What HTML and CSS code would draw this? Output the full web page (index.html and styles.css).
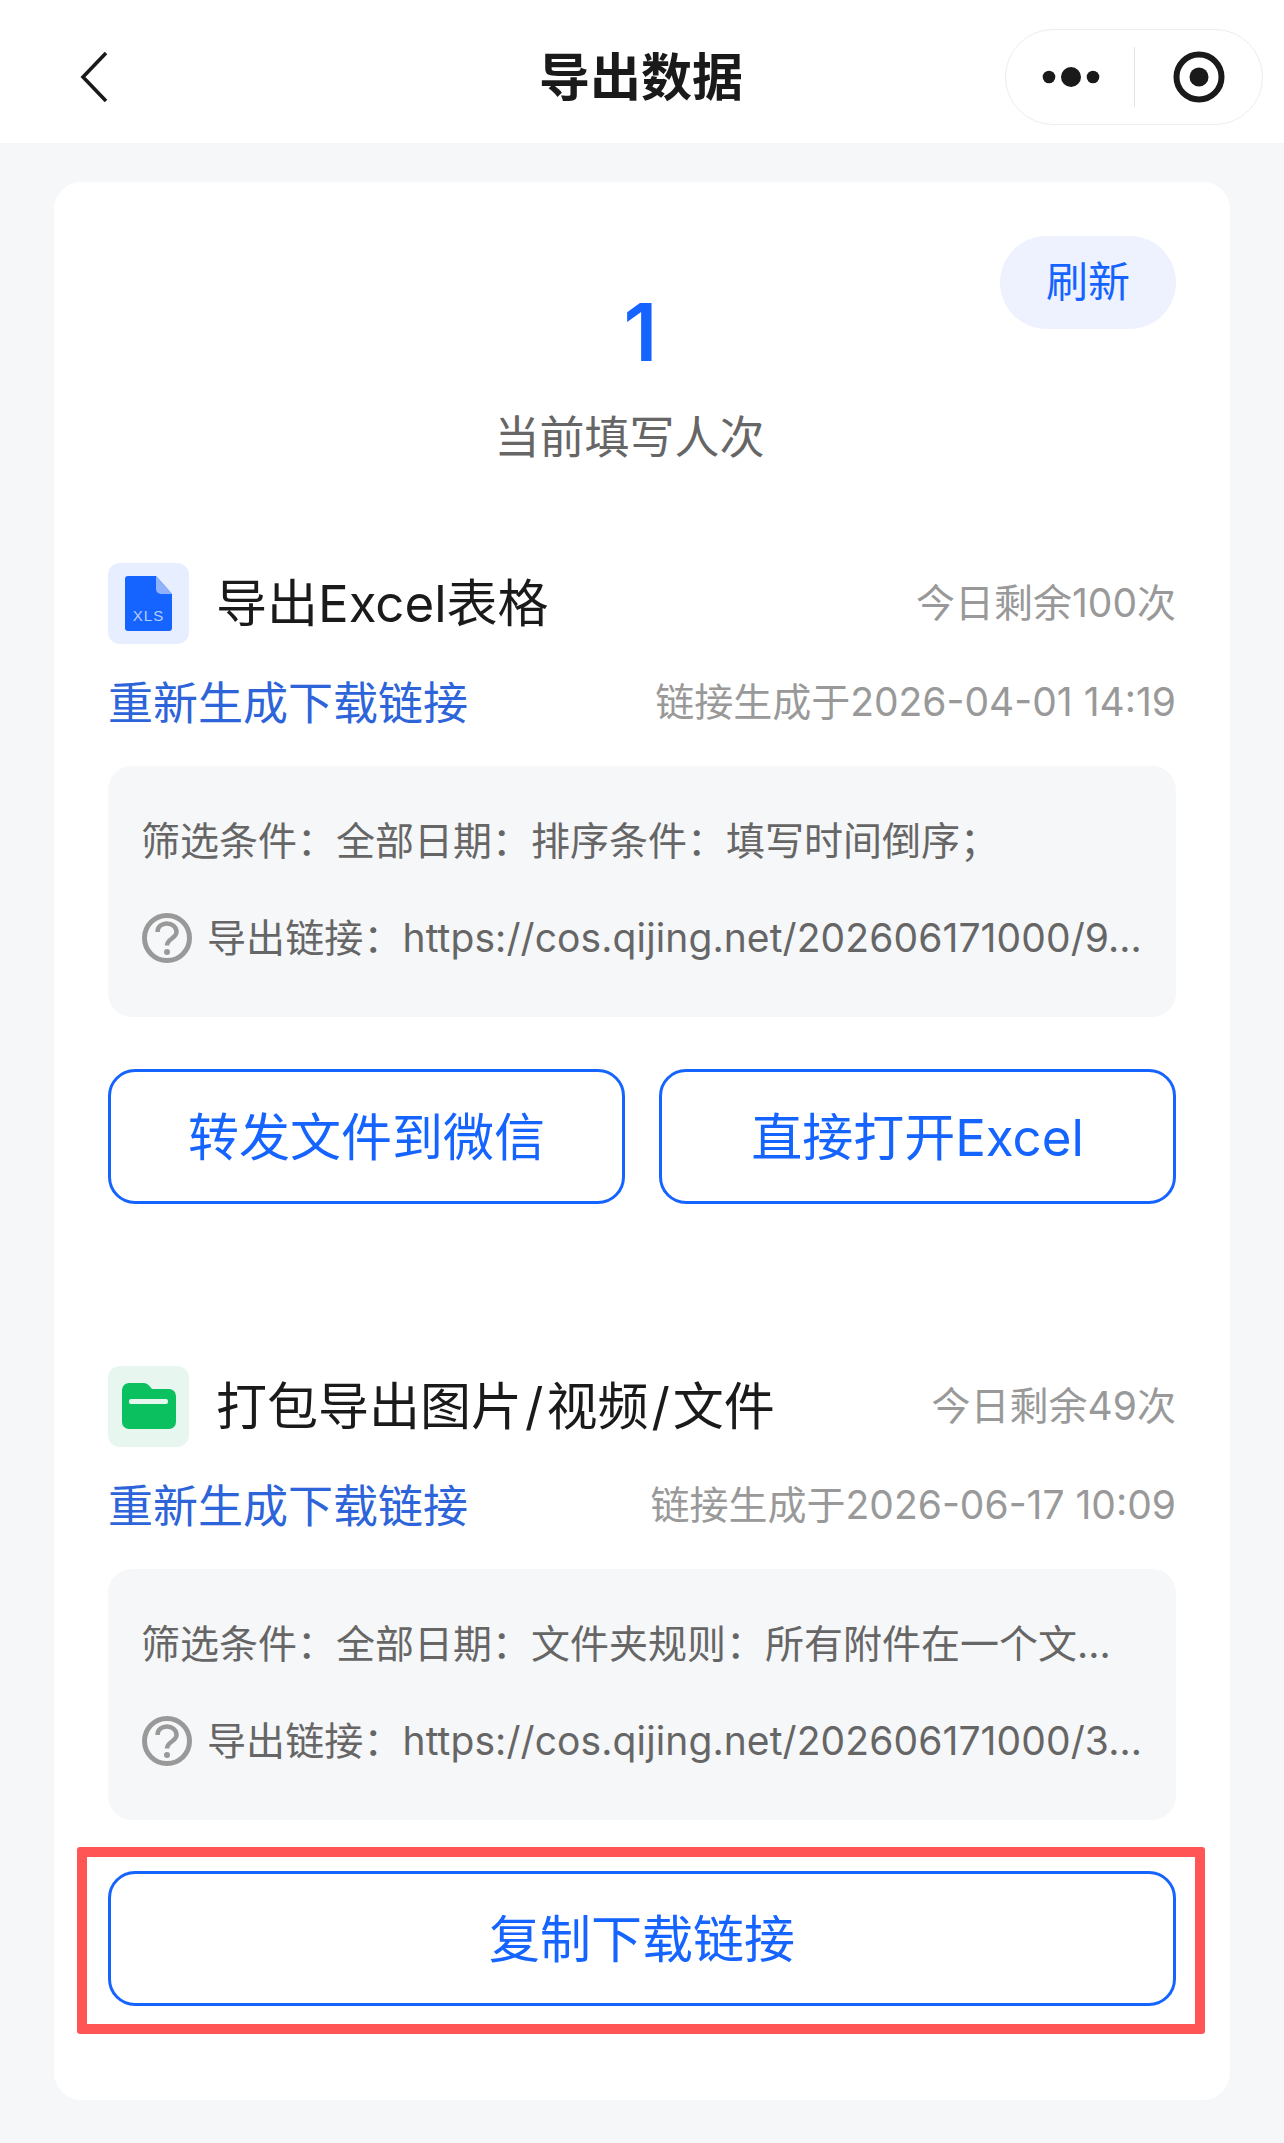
FILE: index.html
```html
<!DOCTYPE html>
<html lang="zh-CN">
<head>
    <meta charset="UTF-8">
    <meta name="viewport" content="width=device-width, initial-scale=1.0">
    <title>导出数据</title>
    <link rel="stylesheet" href="styles.css">
</head>
<body>
    <header class="nav">
        <svg class="nav-back" width="28" height="50" viewBox="0 0 28 50"><path d="M26 1 L3 25 L26 49" fill="none" stroke="#1a1a1a" stroke-width="3.6"/></svg>
        <h1 class="nav-title">导出数据</h1>
        <div class="capsule">
            <svg class="capsule-more" width="58" height="20" viewBox="0 0 58 20"><circle cx="7" cy="10" r="6.3" fill="#1a1a1a"/><circle cx="29" cy="10" r="10" fill="#1a1a1a"/><circle cx="51" cy="10" r="6.3" fill="#1a1a1a"/></svg>
            <span class="capsule-line"></span>
            <svg class="capsule-close" width="52" height="52" viewBox="0 0 52 52"><circle cx="26" cy="26" r="22.5" fill="none" stroke="#1a1a1a" stroke-width="6"/><circle cx="26" cy="26" r="9.5" fill="#1a1a1a"/></svg>
        </div>
    </header>

    <main class="card">
        <div class="stats">
            <button class="refresh">刷新</button>
            <div class="stats-num">1</div>
            <div class="stats-label">当前填写人次</div>
        </div>

        <section class="block block-excel">
            <div class="block-head">
                <span class="block-icon icon-blue">
                    <svg width="81" height="81" viewBox="0 0 81 81">
                        <path d="M20 13 H48 L64 31 V65 a3 3 0 0 1 -3 3 H20 a3 3 0 0 1 -3 -3 V16 a3 3 0 0 1 3 -3 Z" fill="#1664ff"/>
                        <path d="M48 13 L64 31 H53 a5 5 0 0 1 -5 -5 Z" fill="#8fb2fb"/>
                        <text x="40.5" y="58" text-anchor="middle" class="xls-text">XLS</text>
                    </svg>
                </span>
                <span class="block-title">导出Excel表格</span>
                <span class="block-left">今日剩余100次</span>
            </div>
            <div class="block-link">
                <a class="link">重新生成下载链接</a>
                <span class="link-time">链接生成于2026-04-01 14:19</span>
            </div>
            <div class="info">
                <div class="info-line">筛选条件：全部日期：排序条件：填写时间倒序；</div>
                <div class="info-url">
                    <svg class="help" width="50" height="50" viewBox="0 0 50 50"><circle cx="25" cy="25" r="22.5" fill="none" stroke="#999" stroke-width="5"/><path d="M15.5 19 C15.500 7.500 34.500 8 34.500 19 C34.500 25.500 25 25.500 25 32.500" fill="none" stroke="#999" stroke-width="4.500"/><circle cx="25" cy="39" r="3" fill="#999"/></svg>
                    <span class="info-line url-text">导出链接：https://cos.qijing.net/202606171000/9…</span>
                </div>
            </div>
            <div class="btn-row">
                <button class="btn">转发文件到微信</button>
                <button class="btn">直接打开Excel</button>
            </div>
        </section>

        <section class="block block-zip">
            <div class="block-head">
                <span class="block-icon icon-green">
                    <svg width="81" height="81" viewBox="0 0 81 81">
                        <path d="M21 17 H36 a6 6 0 0 1 5 2.500 L44 23 H61 a7 7 0 0 1 7 7 V56 a7 7 0 0 1 -7 7 H21 a7 7 0 0 1 -7 -7 V24 a7 7 0 0 1 7 -7 Z" fill="#0bc15f"/>
                        <rect x="21" y="33" width="39" height="5" rx="2" fill="#e7f7f0"/>
                    </svg>
                </span>
                <span class="block-title">打包导出图片<span class="slash">/</span>视频<span class="slash">/</span>文件</span>
                <span class="block-left">今日剩余49次</span>
            </div>
            <div class="block-link">
                <a class="link">重新生成下载链接</a>
                <span class="link-time">链接生成于2026-06-17 10:09</span>
            </div>
            <div class="info">
                <div class="info-line">筛选条件：全部日期：文件夹规则：所有附件在一个文…</div>
                <div class="info-url">
                    <svg class="help" width="50" height="50" viewBox="0 0 50 50"><circle cx="25" cy="25" r="22.5" fill="none" stroke="#999" stroke-width="5"/><path d="M15.5 19 C15.500 7.500 34.500 8 34.500 19 C34.500 25.500 25 25.500 25 32.500" fill="none" stroke="#999" stroke-width="4.500"/><circle cx="25" cy="39" r="3" fill="#999"/></svg>
                    <span class="info-line url-text">导出链接：https://cos.qijing.net/202606171000/3…</span>
                </div>
            </div>
            <div class="copy-wrap">
                <span class="copy-mark"></span>
                <button class="btn">复制下载链接</button>
            </div>
        </section>
    </main>
</body>
</html>
```

FILE: styles.css
```css
* {
    box-sizing: border-box;
}
body {
    margin: 0;
    min-height: 100vh;
    background-color: #f6f7f9;
    color: #1a1a1a;
    font-family: 'Inter', 'Noto Sans CJK SC', sans-serif;
}
.nav {
    height: 143px;
    background: #fff;
    display: grid;
    grid-template-columns: 1fr auto 1fr;
    align-items: center;
    padding: 10px 21px 0 80px;
}
.nav-back {
    display: block;
}
.nav-title {
    margin: 0 0 0 -1px;
    padding-top: 2px;
    font-size: 51px;
    font-weight: 700;
    line-height: 60px;
    transform: translateX(-30px);
}
.capsule {
    justify-self: end;
    width: 258px;
    height: 96px;
    border: 1.5px solid #ededed;
    border-radius: 48px;
    display: flex;
    align-items: center;
    padding-left: 36px;
}
.capsule-line {
    width: 1px;
    height: 60px;
    background: #e4e4e4;
    margin: 0 0 0 34px;
}
.capsule-close {
    margin-left: 38px;
}
.card {
    margin: 39px 54px 0;
    height: 1918px;
    padding: 54px;
    background: #fff;
    border-radius: 27px;
}
.stats {
    position: relative;
    height: 327px;
    padding-top: 54px;
    display: flex;
    flex-direction: column;
    align-items: center;
}
.refresh {
    position: absolute;
    top: 0;
    right: 0;
    width: 176px;
    height: 93px;
    border: none;
    border-radius: 47px;
    background: #eef2fe;
    color: #1664ff;
    font-family: inherit;
    font-size: 42px;
    padding: 0 0 9px;
}
.stats-num {
    margin-right: 3px;
    color: #1664ff;
    font-size: 80px;
    font-weight: 600;
    line-height: 84px;
}
.stats-label {
    margin-top: 34px;
    margin-right: 25px;
    color: #666;
    font-size: 45px;
    line-height: 60px;
}
.block-head {
    display: flex;
    align-items: center;
    height: 81px;
}
.block-icon {
    width: 81px;
    height: 81px;
    border-radius: 12px;
    flex-shrink: 0;
}
.block-icon svg {
    display: block;
}
.icon-blue {
    background: #e7eeff;
}
.icon-green {
    background: #e7f7f0;
}
.xls-text {
    font-family: 'Liberation Sans', sans-serif;
    font-size: 15px;
    fill: #b7cdfd;
    letter-spacing: 1px;
}
.block-title {
    margin-left: 27px;
    font-size: 51px;
    line-height: 60px;
}
.slash {
    margin: 0 3px;
}
.block-left {
    margin-left: auto;
    padding-bottom: 8px;
    color: #999;
    font-size: 39px;
}
.block-link {
    display: flex;
    align-items: center;
    justify-content: space-between;
    height: 60px;
    margin-top: 29px;
}
.link {
    padding-bottom: 6px;
    color: #2d64d9;
    font-size: 45px;
}
.link-time {
    padding-bottom: 8px;
    color: #999;
    font-size: 39px;
}
.info {
    height: 251px;
    margin-top: 33px;
    padding: 45px 24px 0 33px;
    background: #f6f7f9;
    border-radius: 24px;
}
.info-line {
    color: #666;
    font-size: 39px;
    line-height: 60px;
    white-space: nowrap;
}
.url-text {
    letter-spacing: 0.1px;
}
.info-url {
    display: flex;
    align-items: center;
    gap: 15px;
    margin-top: 37px;
    padding-left: 1px;
}
.help {
    flex-shrink: 0;
}
.btn-row {
    display: flex;
    gap: 34px;
    margin-top: 52px;
}
.btn {
    flex: 1;
    height: 135px;
    background: #fff;
    border: 3px solid #1664ff;
    border-radius: 27px;
    color: #1664ff;
    font-family: inherit;
    font-size: 51px;
    padding: 0 0 5px;
}
.block-zip {
    margin-top: 162px;
}
.copy-wrap {
    position: relative;
    display: flex;
    margin-top: 51px;
}
.copy-mark {
    position: absolute;
    top: -24px;
    left: -31px;
    right: -29px;
    bottom: -28px;
    border: 10px solid #ff5555;
    border-radius: 3px;
}
```
